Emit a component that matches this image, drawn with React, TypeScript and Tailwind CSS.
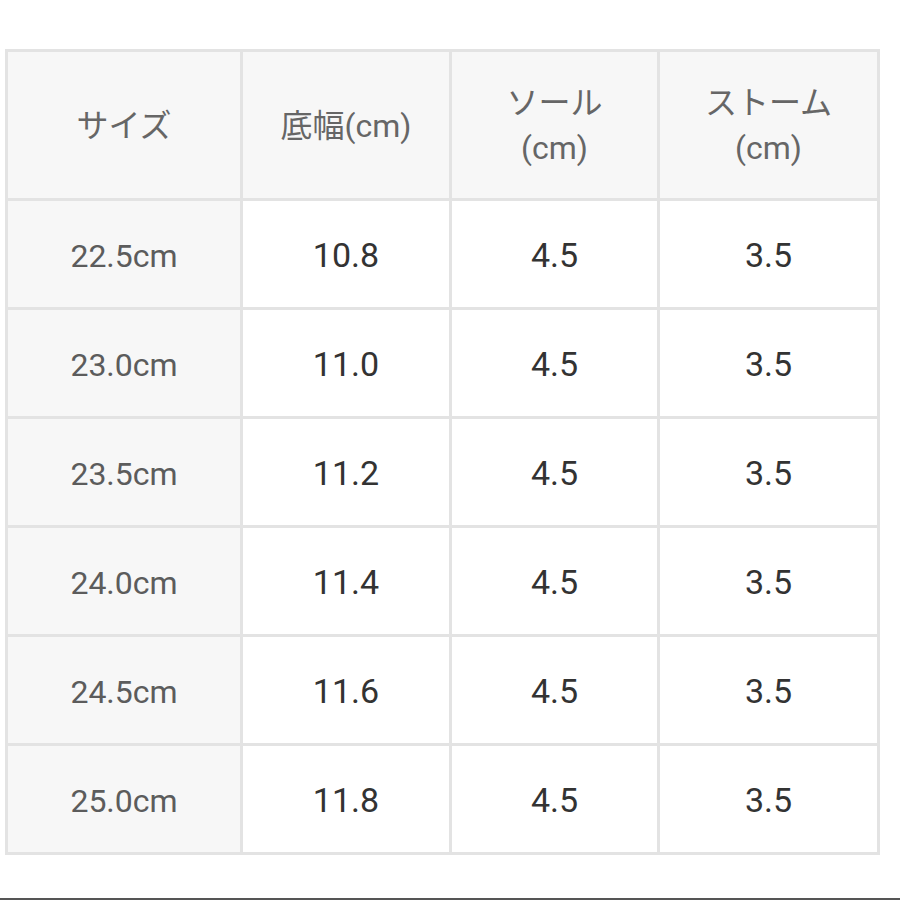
import React from "react";

const rows = [
  ["22.5cm", "10.8", "4.5", "3.5"],
  ["23.0cm", "11.0", "4.5", "3.5"],
  ["23.5cm", "11.2", "4.5", "3.5"],
  ["24.0cm", "11.4", "4.5", "3.5"],
  ["24.5cm", "11.6", "4.5", "3.5"],
  ["25.0cm", "11.8", "4.5", "3.5"],
];

export default function App() {
  return (
    <div
      className="flex h-[900px] w-[900px] flex-col bg-white"
      style={{ fontFamily: 'Roboto, "Noto Sans CJK JP", sans-serif' }}
    >
      <div className="ml-[5px] mt-[49px] grid w-[875px] grid-cols-[232px_206px_205px_217px] grid-rows-[146px_repeat(6,106px)] gap-[3px] bg-[#e3e3e3] p-[3px]">
        <div className="flex items-center justify-center bg-[#f7f7f7] pt-[2px] text-[32px] text-[#666]">サイズ</div>
        <div className="flex items-center justify-center bg-[#f7f7f7] pt-[2px] text-[32px] text-[#666]">底幅(cm)</div>
        <div className="flex flex-col items-center justify-center bg-[#f7f7f7] pt-[2px] text-[32px] leading-[45px] text-[#666]">
          <span>ソール</span>
          <span>(cm)</span>
        </div>
        <div className="flex flex-col items-center justify-center bg-[#f7f7f7] pt-[2px] text-[32px] leading-[45px] text-[#666]">
          <span>ストーム</span>
          <span>(cm)</span>
        </div>
        {rows.map((r) => (
          <React.Fragment key={r[0]}>
            <div className="flex items-center justify-center bg-[#f7f7f7] pt-[3px] text-[32px] text-[#5c5c5c]">{r[0]}</div>
            <div className="flex items-center justify-center bg-white pt-[3px] text-[34px] text-[#333]">{r[1]}</div>
            <div className="flex items-center justify-center bg-white pt-[3px] text-[34px] text-[#333]">{r[2]}</div>
            <div className="flex items-center justify-center bg-white pt-[3px] text-[34px] text-[#333]">{r[3]}</div>
          </React.Fragment>
        ))}
      </div>
      <div className="mt-auto h-[2px] w-full bg-[#555]" />
    </div>
  );
}
